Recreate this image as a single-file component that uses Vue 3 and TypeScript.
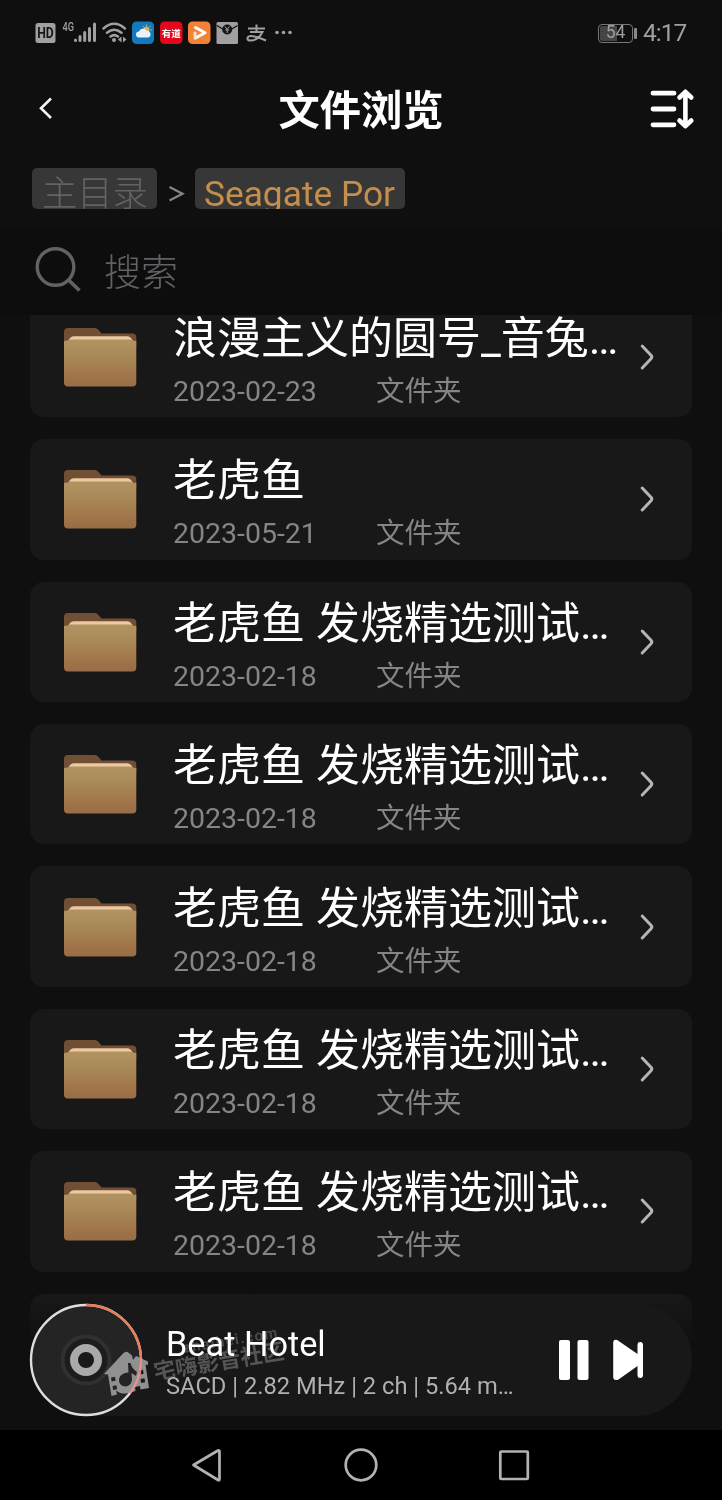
<script setup lang="ts">
interface Folder {
  name: string
  date: string
}

const longName = '老虎鱼 发烧精选测试天碟'
const folders: Folder[] = [
  { name: '浪漫主义的圆号_音兔音乐', date: '2023-02-23' },
  { name: '老虎鱼', date: '2023-05-21' },
  { name: longName, date: '2023-02-18' },
  { name: longName, date: '2023-02-18' },
  { name: longName, date: '2023-02-18' },
  { name: longName, date: '2023-02-18' },
  { name: longName, date: '2023-02-18' },
]
</script>

<template>
  <div class="screen">
    <div class="status">
      <svg class="status-icons" width="262" height="30" viewBox="34 18 262 30">
        <rect x="35.500" y="23" width="20" height="20" rx="2.500" fill="#a0a0a0" />
        <text x="45.500" y="38.300" class="hd" text-anchor="middle" textLength="16.500" lengthAdjust="spacingAndGlyphs">HD</text>
        <text x="62.500" y="31" class="g4" textLength="11.500" lengthAdjust="spacingAndGlyphs">4G</text>
        <path d="M75.500 40v.5M80 36.500v4M84.700 32.500v8M89.500 28.500v12M94.500 24v16.500" stroke="#a0a0a0" stroke-width="3" stroke-linecap="round" />
        <g fill="none" stroke="#a0a0a0" stroke-width="2.500" stroke-linecap="round">
          <path d="M103.500 28.500q10.700-9.400 21.400 0M107 32.700q7.200-6 14.500 0M110.500 36.500q3.700-2.800 7.500 0" />
        </g>
        <circle cx="114" cy="40" r="2" fill="#a0a0a0" />
        <path d="M121.500 36.500v6l-3.500-3zM123 36.500v6l3.500-3z" fill="#a0a0a0" />
        <rect x="132" y="21.500" width="22" height="22.500" rx="4.500" fill="#1279bd" />
        <circle cx="146.500" cy="29.500" r="3" fill="#d6b26a" />
        <path d="M139 37.500a3 3 0 0 1 0-6 4 4 0 0 1 7.500-.5 3.300 3.300 0 0 1 1.500 6.500z" fill="#e8f2f8" />
        <path d="M146.500 24.500v1.500M150.500 26l-1 1M152 30h-1.500M142.700 26l1 1" stroke="#d6b26a" stroke-width="1" />
        <rect x="160" y="21.500" width="22.500" height="22.500" rx="4.500" fill="#e4061c" />
        <text x="171.200" y="36.500" class="youdao" text-anchor="middle">有道</text>
        <rect x="188" y="21.500" width="22.500" height="22.500" rx="4.500" fill="#f48236" />
        <path d="M195.500 27.500l9.500 5.300-9.500 5.200" fill="none" stroke="#fff" stroke-width="3" stroke-linejoin="round" stroke-linecap="round" />
        <path d="M195 33v5" stroke="#ffe0c8" stroke-width="3" stroke-linecap="round" />
        <rect x="216.500" y="22" width="21.500" height="22" rx="1.500" fill="#a0a0a0" />
        <path d="M217 25.500q5 3.500 8 4M237.500 25.500q-5 3.500-8 4" stroke="#151515" stroke-width="1.500" fill="none" />
        <circle cx="227.200" cy="29.500" r="5" fill="#151515" />
        <path d="M225 26.500l2.200 3 2.200-3M227.200 29.500v3.500M225.300 30h3.800" stroke="#a0a0a0" stroke-width="1" fill="none" />
        <path d="M248 28.500h17M256.500 24.500v7.500M250 32h12.500q-4.500 8.500-12 8.500-3.500 0-3-2.500 1-3 7-1.500 6 1.500 11.500 4" fill="none" stroke="#a0a0a0" stroke-width="2" />
        <g fill="#a0a0a0">
          <circle cx="277" cy="32.500" r="1.800" />
          <circle cx="283.500" cy="32.500" r="1.800" />
          <circle cx="290" cy="32.500" r="1.800" />
        </g>
      </svg>
      <div class="status-right">
        <div class="battery"><span>54</span></div>
        <i class="battery-tip"></i>
        <span class="clock">4:17</span>
      </div>
    </div>

    <header class="header">
      <svg class="back" width="16" height="24" viewBox="0 0 16 24">
        <path d="M13 1.500L3 11.300 13 21" fill="none" stroke="#f4f4f4" stroke-width="2.600" />
      </svg>
      <h1>文件浏览</h1>
      <svg class="sort" width="46" height="42" viewBox="0 0 46 42">
        <g fill="none" stroke="#fff" stroke-linecap="round">
          <path d="M4 5.200h21M4 21h21M4 36.800h21" stroke-width="4.800" />
          <path d="M36.400 5v31M30.500 9.500l5.900-5.700 5.900 5.700M30.500 32.500l5.900 5.700 5.900-5.700" stroke-width="4.600" stroke-linejoin="round" />
        </g>
      </svg>
    </header>

    <nav class="crumbs">
      <span class="chip root">主目录</span>
      <svg width="16" height="18" viewBox="0 0 16 18"><path d="M.5 2L13.500 8.700.5 15.500" fill="none" stroke="#858585" stroke-width="2.300" /></svg>
      <span class="chip current">Seagate Por</span>
    </nav>

    <div class="search">
      <svg width="48" height="48" viewBox="0 0 48 48">
        <circle cx="20.500" cy="21" r="18.300" fill="none" stroke="#626262" stroke-width="3.400" />
        <path d="M33 33.500l11.500 11" stroke="#626262" stroke-width="3.800" />
      </svg>
      <span>搜索</span>
    </div>

    <main class="list">
      <article v-for="(f, i) in folders" :key="i" class="card">
        <svg class="folder" width="74" height="60" viewBox="0 0 74 60">
          <defs>
            <linearGradient id="folderFront" x1="0" y1="0" x2="0" y2="1">
              <stop offset="0" stop-color="#b29462" />
              <stop offset=".35" stop-color="#a98958" />
              <stop offset=".8" stop-color="#a07348" />
              <stop offset="1" stop-color="#986d47" />
            </linearGradient>
          </defs>
          <path d="M1 20V5Q1 1 5 1H31.500q2.500 0 4 2l3 3.500H69q4.300 0 4.300 4V20z" fill="#704f35" />
          <path d="M4.500 16q2-6.800 6-6.800H64.500q4 0 6 6.800z" fill="#ecc9a0" />
          <path d="M1 14Q5.500 13.500 6.500 12.500H67.500Q68.500 13.500 73.300 14V55.500q0 4-4 4H5q-4 0-4-4z" fill="url(#folderFront)" />
        </svg>
        <div class="info">
          <div class="name">{{ f.name }}</div>
          <div class="meta"><span class="date">{{ f.date }}</span><span>文件夹</span></div>
        </div>
        <svg class="chevron" width="16" height="28" viewBox="0 0 16 28">
          <path d="M3.200 3L12 12.300q1.600 1.700 0 3.400L3.200 25" fill="none" stroke="#b5b5b5" stroke-width="3" stroke-linecap="round" />
        </svg>
      </article>
      <article class="card"></article>
    </main>

    <div class="player-zone">
      <div class="player">
        <svg class="disc" width="114" height="114" viewBox="0 0 114 114">
          <circle cx="57" cy="57" r="55" fill="#242424" stroke="#dedede" stroke-width="2.400" />
          <path d="M57 2A55 55 0 0 1 101 90" fill="none" stroke="#e87b59" stroke-width="2.400" />
          <circle cx="57" cy="57" r="23.500" fill="#1c1c1c" stroke="#303030" stroke-width="4" />
          <circle cx="57" cy="57" r="12" fill="#191919" stroke="#a9a9a9" stroke-width="8" />
        </svg>
        <div class="track">
          <div class="song">Beat Hotel</div>
          <div class="format">SACD | 2.82 MHz | 2 ch | 5.64 mbps</div>
        </div>
        <svg class="controls" width="88" height="44" viewBox="0 0 88 44">
          <g fill="#fff">
            <rect x="0" y="2" width="11" height="40" rx="2" />
            <rect x="18.500" y="2" width="11" height="40" rx="2" />
            <path d="M54.200 5q0-4 4-3L78.500 16V7q0-3 2.700-3 2.800 0 2.800 3V37q0 3-2.800 3-2.700 0-2.700-3V28L59.500 41.500q-5.300 2-5.300-3z" />
          </g>
        </svg>
      </div>
      <svg class="watermark" width="200" height="84" viewBox="0 0 200 84">
        <path
          fill="#909090"
          fill-rule="evenodd"
          d="M3 42L22 21.500Q25 18.500 28 21L31 23.500 32 28 35 24 47 29.500V33L44.500 32.500 48 56 39.500 57.500 39 54 34 55 34.500 59 28 61Q20 63 15 58.500L16 62.500 10.500 64 7 42.500z
             M27 31L29.500 31Q31 37 36 40L35 44 30.500 41 31 48Q30 54 24 54.500 17.500 54 18 47 19.500 41 27.500 40.500z
             M10 45.500l4-.7.600 4-4 .7zM11.500 54l4-.7.600 4-4 .7zM38 38.500l4-.7.600 4-4 .7zM39.500 47l4-.7.600 4-4 .7z"
        />
        <text x="54" y="48" class="wm-cn" textLength="132" lengthAdjust="spacingAndGlyphs" transform="rotate(-9.400 54 48)">宅嗨影音社区</text>
        <text x="83" y="21" class="wm-en" textLength="95" lengthAdjust="spacing" transform="rotate(-9.400 83 21)">zhaihei.com</text>
      </svg>
    </div>

    <footer class="navbar">
      <svg width="722" height="70" viewBox="0 0 722 70">
        <g fill="none" stroke="#b2b2b2" stroke-width="2.700" stroke-linejoin="round">
          <path d="M193.500 35L218 20.500Q219.500 20 219.500 21.500V49Q219.500 51 218 50z" />
          <circle cx="361" cy="35" r="15.300" />
          <rect x="500.300" y="21.500" width="27.500" height="27.500" rx="1" />
        </g>
      </svg>
    </footer>
  </div>
</template>

<style>
body {
  margin: 0;
  background: #0f0f0f;
}
</style>

<style scoped>
.screen {
  position: relative;
  width: 722px;
  height: 1500px;
  display: flex;
  flex-direction: column;
  overflow: hidden;
  background: #0f0f0f;
  color: #fff;
  font-family: Roboto, "Noto Sans CJK SC", sans-serif;
}
.status {
  height: 65px;
  flex: none;
  display: flex;
  justify-content: space-between;
  box-sizing: border-box;
  padding: 18px 36px 0 34px;
}
.hd {
  font: 700 14px Roboto, sans-serif;
  fill: #151515;
}
.g4 {
  font: 500 12px Roboto, sans-serif;
  fill: #a0a0a0;
}
.youdao {
  font: 700 9.500px "Noto Sans CJK SC", sans-serif;
  fill: #fff;
}
.status-right {
  display: flex;
  align-items: center;
  height: 30px;
  color: #a0a0a0;
}
.battery {
  box-sizing: border-box;
  width: 35px;
  height: 19px;
  border: 1.500px solid #777;
  border-radius: 4px;
  padding: 1px;
  background: linear-gradient(90deg, #454545 55%, transparent 55%) content-box;
  font-size: 17.500px;
  line-height: 13px;
  text-align: center;
}
.battery-tip {
  width: 3px;
  height: 11px;
  margin: 0 6px 0 1px;
  border-radius: 1px;
  background: #8a8a8a;
}
.clock {
  width: 43px;
  white-space: nowrap;
  font-size: 24.500px;
  line-height: 30px;
  letter-spacing: -1px;
}
.header {
  height: 103px;
  flex: none;
  display: grid;
  grid-template-columns: 60px 1fr 60px;
  align-items: center;
  box-sizing: border-box;
  padding: 0 12px 16px;
}
.back {
  margin-left: 26px;
}
h1 {
  margin: 0;
  padding-top: 5px;
  text-align: center;
  font-size: 41.300px;
  line-height: 60px;
  font-weight: 700;
}
.sort {
  margin-left: -1px;
}
.crumbs {
  height: 60px;
  flex: none;
  display: flex;
  align-items: flex-start;
  padding-left: 32px;
}
.crumbs svg {
  margin: 17px 10px 0 12px;
}
.chip {
  box-sizing: border-box;
  height: 41px;
  padding: 0 9px;
  border-radius: 5px;
  background: #373737;
  overflow: hidden;
  white-space: nowrap;
  font-size: 35.300px;
  line-height: 52px;
}
.root {
  width: 125px;
  padding-left: 10px;
  color: #636363;
  font-weight: 300;
}
.current {
  width: 210px;
  color: #c48e4b;
}
.search {
  height: 87px;
  flex: none;
  display: flex;
  align-items: center;
  gap: 21px;
  box-sizing: border-box;
  padding: 0 0 4px 35px;
  background: #0d0d0d;
  color: #626266;
  font-size: 37px;
  font-weight: 300;
}
.list {
  flex: 1;
  min-height: 0;
  overflow: hidden;
  display: flex;
  flex-direction: column;
  gap: 22px;
  padding: 0 30px;
}
.card {
  height: 120.400px;
  flex: none;
  display: flex;
  align-items: center;
  box-sizing: border-box;
  padding: 0 36px 0 33px;
  border-radius: 14px;
  background: #181818;
}
.card:first-child {
  margin-top: -18.200px;
}
.folder {
  flex: none;
}
.info {
  width: 450px;
  margin-left: 36px;
  padding-top: 8px;
}
.name {
  overflow: hidden;
  white-space: nowrap;
  text-overflow: ellipsis;
  font-size: 44px;
  line-height: 58px;
}
.meta {
  display: flex;
  color: #858585;
  font-size: 28.500px;
  line-height: 40px;
  margin-top: 4px;
}
.date {
  width: 203px;
}
.chevron {
  flex: none;
  margin-left: 16px;
}
.player-zone {
  position: absolute;
  left: 0;
  right: 0;
  bottom: 70px;
  height: 136px;
  box-sizing: border-box;
  padding: 10px 30px 0;
  background: linear-gradient(rgba(15, 15, 15, 0), #0f0f0f 50px);
}
.player {
  height: 112px;
  display: flex;
  align-items: center;
  border-radius: 56px;
  background: #181818;
}
.disc {
  margin-left: -1px;
  flex: none;
}
.track {
  width: 351px;
  margin-left: 23px;
  padding-top: 4px;
}
.song {
  font-size: 34.300px;
  line-height: 44px;
}
.format {
  overflow: hidden;
  white-space: nowrap;
  text-overflow: ellipsis;
  color: #b0b0b0;
  font-size: 23.700px;
  line-height: 32px;
  margin-top: 4px;
}
.controls {
  margin-left: 42px;
}
.watermark {
  position: absolute;
  left: 101px;
  top: 38px;
  overflow: visible;
  mix-blend-mode: lighten;
}
.wm-cn {
  font: 700 22px "Noto Sans CJK SC", sans-serif;
  fill: #555;
}
.wm-en {
  font: 700 15px Roboto, sans-serif;
  fill: #484848;
}
.navbar {
  height: 70px;
  flex: none;
  background: #000;
}
</style>
